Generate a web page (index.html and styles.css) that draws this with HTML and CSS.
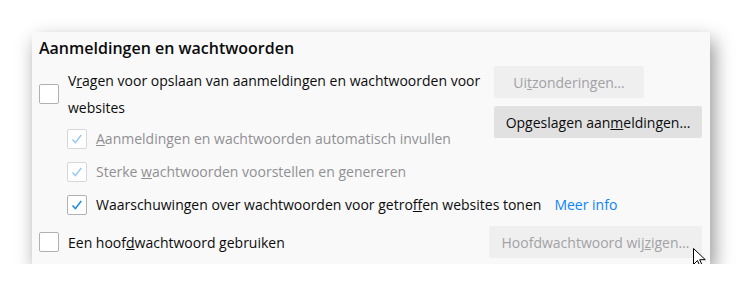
FILE: index.html
```html
<!DOCTYPE html>
<html lang="nl">
<head>
<meta charset="utf-8">
<link rel="stylesheet" href="styles.css">
</head>
<body>
<div class="panel">
  <h2 class="title">Aanmeldingen en wachtwoorden</h2>
  <div class="grid">
    <div class="row main">
      <span class="cb"></span>
      <span class="label">V<u>r</u>agen voor opslaan van aanmeldingen en wachtwoorden voor<br>websites</span>
    </div>
    <div class="buttons">
      <button class="btn disabled w150">Ui<u>t</u>zonderingen…</button>
      <button class="btn w208">Opgeslagen aan<u>m</u>eldingen…</button>
    </div>
    <div class="row sub dis">
      <span class="cb checked"><svg viewBox="0 0 20 20"><path d="M5 10.5l3.2 3.5 6.5-8.5"/></svg></span>
      <span class="label"><u>A</u>anmeldingen en wachtwoorden automatisch invullen</span>
    </div>
    <div class="row sub dis full">
      <span class="cb checked"><svg viewBox="0 0 20 20"><path d="M5 10.5l3.2 3.5 6.5-8.5"/></svg></span>
      <span class="label">Sterke <u>w</u>achtwoorden voorstellen en genereren</span>
    </div>
    <div class="row sub full">
      <span class="cb checked"><svg viewBox="0 0 20 20"><path d="M5 10.5l3.2 3.5 6.5-8.5"/></svg></span>
      <span class="label">Waarschuwingen over wachtwoorden voor getro<u>f</u>fen websites tonen</span>
      <a class="link">Meer info</a>
    </div>
  </div>
  <div class="bottom">
    <div class="row">
      <span class="cb"></span>
      <span class="label">Een hoof<u>d</u>wachtwoord gebruiken</span>
    </div>
    <button class="btn disabled w213">Hoofdwachtwoord wij<u>z</u>igen…</button>
  </div>
  <svg class="cursor" viewBox="0 0 13 20" width="13" height="20"><path d="M0.5 0.5v16l4-4 2.6 6 2.2-1-2.6-5.8h5.6z" fill="#fff" stroke="#000" stroke-width="1" stroke-linejoin="miter"/></svg>
</div>
</body>
</html>
```
FILE: styles.css
```css
* { box-sizing: border-box; }
body {
  margin: 0;
  background: #fff;
  font-family: "Open Sans", "Noto Sans", sans-serif;
  font-size: 14px;
  color: #0c0c0d;
}
.panel {
  position: relative;
  margin: 32px 0 0 32px;
  width: 678px;
  height: 232px;
  background: #f9f9fa;
  box-shadow: 4px 8px 18px rgba(0,0,0,0.42);
  padding: 5px 8px 0 7px;
}
.title {
  margin: 0;
  font-size: 16px;
  font-weight: 600;
  line-height: 22px;
}
.grid {
  display: grid;
  grid-template-columns: 1fr 208px;
  margin-top: 7px;
}
.buttons {
  grid-row: span 2;
  display: flex;
  flex-direction: column;
  align-items: flex-start;
  gap: 8px;
}
.full { grid-column: 1 / -1; }
.row {
  display: flex;
  align-items: center;
  gap: 9px;
}
.main { height: 56px; }
.main .label { line-height: 27px; width: 424px; }
.sub { margin-left: 28px; height: 33px; }
.dis .label { color: #909092; }
.cb {
  flex: none;
  width: 20px;
  height: 20px;
  border: 1px solid #b1b1b3;
  border-radius: 2px;
  background: #fff;
  display: flex;
}
.cb svg { width: 18px; height: 18px; }
.cb path { fill: none; stroke: #1a86e6; stroke-width: 1.6; }
.dis .cb { border-color: #d7d7db; }
.dis .cb path { stroke: #95c8f4; }
.link { color: #0a84ff; margin-left: 4px; }
.btn {
  font: inherit;
  color: #0c0c0d;
  background: #e1e1e2;
  border: none;
  border-radius: 2px;
  height: 32px;
  padding: 0 9px;
}
.btn.disabled { background: #efeff0; color: #a2a2a4; }
.w150 { width: 150px; }
.w208 { width: 208px; }
.w213 { width: 213px; }
.bottom {
  display: flex;
  justify-content: space-between;
  align-items: center;
  margin-top: 5px;
}
.cursor {
  position: absolute;
  left: 661px;
  top: 216px;
}
```
